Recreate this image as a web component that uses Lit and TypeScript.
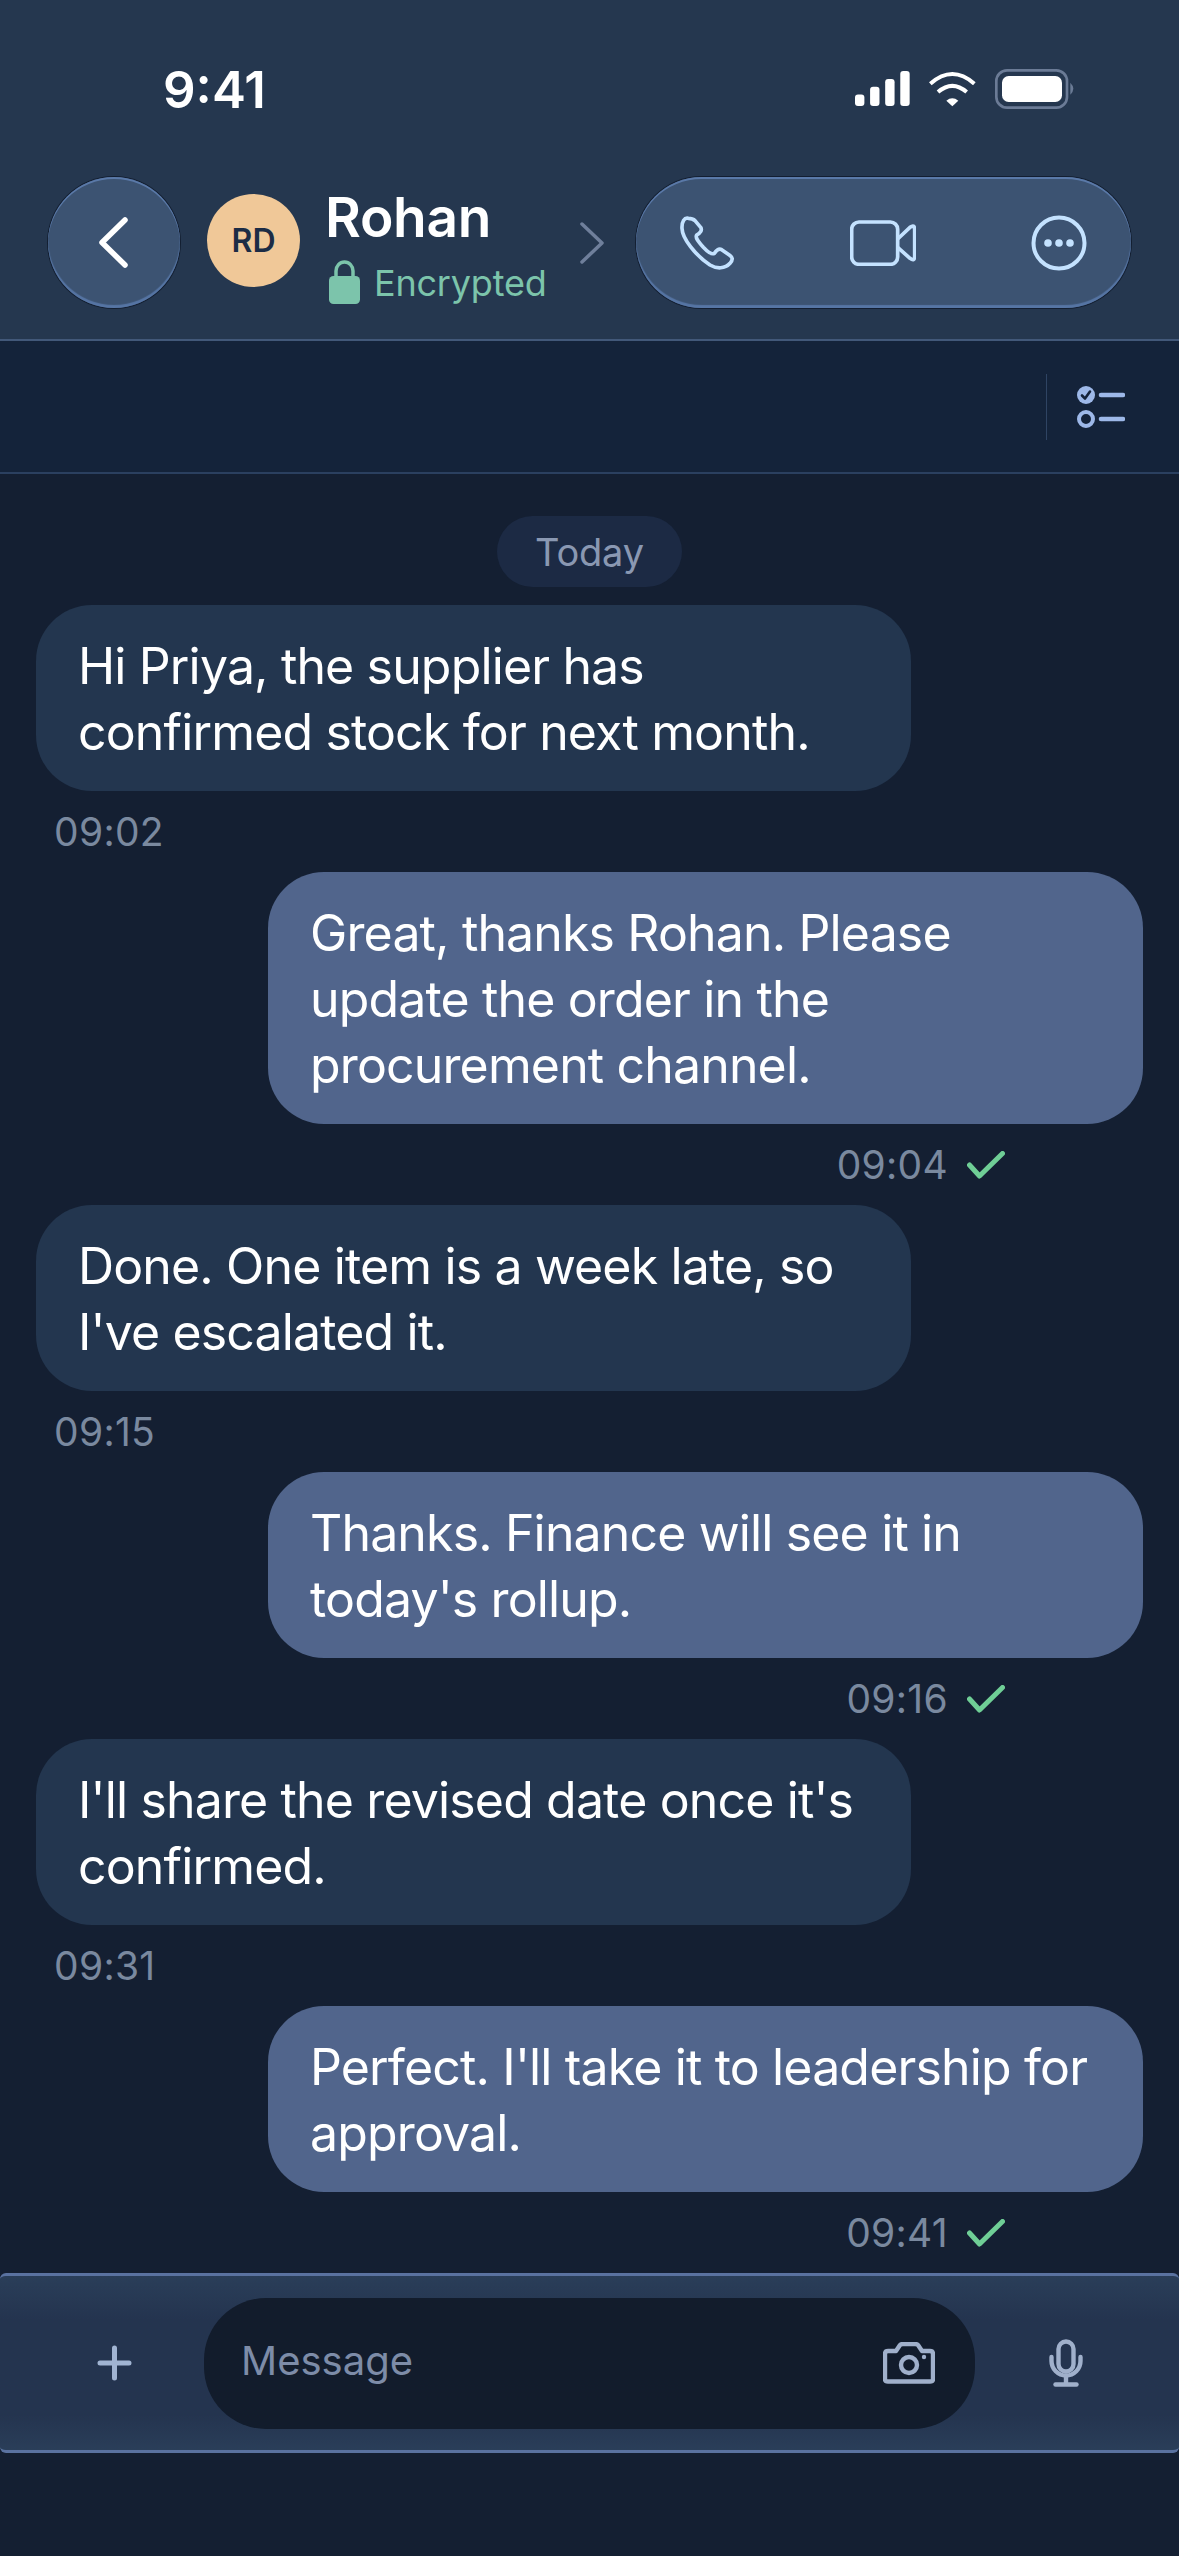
import { LitElement, html, css, svg } from "lit";
import { customElement } from "lit/decorators.js";

type Msg = { out: boolean; text: string; time: string };
const MESSAGES: Msg[] = [
  { out: false, text: "Hi Priya, the supplier has confirmed stock for next month.", time: "09:02" },
  { out: true, text: "Great, thanks Rohan. Please update the order in the procurement channel.", time: "09:04" },
  { out: false, text: "Done. One item is a week late, so I've escalated it.", time: "09:15" },
  { out: true, text: "Thanks. Finance will see it in today's rollup.", time: "09:16" },
  { out: false, text: "I'll share the revised date once it's confirmed.", time: "09:31" },
  { out: true, text: "Perfect. I'll take it to leadership for approval.", time: "09:41" },
];

@customElement("app-root")
export class AppRoot extends LitElement {
  static styles = css`
    :host {
      display: flex;
      flex-direction: column;
      width: 1179px;
      height: 2556px;
      overflow: hidden;
      background: #141f32;
      font-family: Inter, "Liberation Sans", sans-serif;
      color: #fff;
    }
    svg { display: block; flex: none; }
    .header {
      flex: none;
      height: 341px;
      box-sizing: border-box;
      background: #25374f;
      border-bottom: 2px solid #425879;
    }
    .status {
      height: 177px;
      box-sizing: border-box;
      padding: 0 104px 0 163px;
      display: flex;
      align-items: center;
      justify-content: space-between;
    }
    .clock { font-size: 51px; font-weight: 600; line-height: 60px; margin-top: 2px; }
    .status-icons { display: flex; align-items: center; gap: 18px; }
    .nav {
      height: 131px;
      padding: 0 48px;
      display: flex;
      align-items: center;
    }
    .glass {
      background: #3c5372;
      box-shadow: inset 0 2px 0 #5a79a8, inset 0 -3px 1px #5675a4, 0 0 0 1px rgba(14, 23, 39, 0.75);
      display: flex;
      align-items: center;
    }
    .back {
      flex: none;
      width: 132px;
      height: 131px;
      border-radius: 50%;
      justify-content: center;
    }
    .avatar {
      flex: none;
      width: 93px;
      height: 93px;
      margin: -5px 0 0 27px;
      border-radius: 50%;
      background: #f0c898;
      color: #1c2c45;
      font-size: 32px;
      font-weight: 600;
      display: flex;
      align-items: center;
      justify-content: center;
    }
    .who { align-self: flex-start; margin: 9px 0 0 25px; display: flex; flex-direction: column; }
    .name { font-size: 55px; font-weight: 600; line-height: 62px; letter-spacing: -0.3px; }
    .enc {
      display: flex;
      align-items: center;
      gap: 14px;
      margin-left: 4px;
      margin-top: 9px;
      font-size: 36px;
      line-height: 46px;
      letter-spacing: -0.2px;
      color: #7cc4ab;
    }
    .enc span { margin-top: 3px; }
    .more-chevron { margin-left: auto; margin-right: 32px; }
    .actions {
      flex: none;
      width: 495px;
      height: 131px;
      border-radius: 66px;
      box-sizing: border-box;
      padding: 0 44px 0 44px;
      justify-content: space-between;
    }
    .subbar {
      flex: none;
      height: 133px;
      box-sizing: border-box;
      background: #14233a;
      border-bottom: 2px solid #2b4060;
      display: flex;
      align-items: center;
      justify-content: flex-end;
      padding-right: 54px;
    }
    .subbar .divider { width: 1px; height: 66px; background: #2f4463; margin-right: 30px; }
    .list {
      flex: 1;
      min-height: 0;
      padding-top: 42px;
      display: flex;
      flex-direction: column;
    }
    .today {
      align-self: center;
      height: 72px;
      padding: 0 38px;
      margin-bottom: 18px;
      border-radius: 36px;
      background: #1c2a44;
      color: #8a98b2;
      font-size: 38px;
      letter-spacing: -0.2px;
      display: flex;
      align-items: center;
    }
    .msg { display: flex; flex-direction: column; align-items: flex-start; padding: 0 36px; }
    .msg.out { align-items: flex-end; }
    .bubble {
      width: 875px;
      box-sizing: border-box;
      padding: 28px 42px 26px;
      border-radius: 56px;
      background: #23364f;
      font-size: 50px;
      line-height: 66px;
      letter-spacing: -0.85px;
    }
    .out .bubble { background: #51658c; }
    .meta {
      height: 81px;
      display: flex;
      align-items: center;
      gap: 19px;
      font-size: 39px;
      letter-spacing: 0.3px;
      color: #7a899f;
      padding-left: 18px;
    }
    .out .meta { padding: 0 138px 0 0; }
    .composer {
      flex: none;
      height: 180px;
      box-sizing: border-box;
      border-top: 3px solid #5a72a0;
      border-bottom: 3px solid #5a72a0;
      border-radius: 6px;
      background: linear-gradient(#2a3e59, #24344f 25%, #24344f 80%, #2a3e59);
      display: flex;
      align-items: center;
      padding-left: 97px;
    }
    .input {
      flex: none;
      width: 771px;
      height: 131px;
      margin: 0 74px 0 72px;
      padding: 0 40px 0 37px;
      box-sizing: border-box;
      border-radius: 62px;
      background: #121c2c;
      color: #7d8ca8;
      font-size: 40px;
      display: flex;
      align-items: center;
      justify-content: space-between;
    }
    .input span { margin-top: -6px; }
    .foot { flex: none; height: 103px; }
  `;

  private check() {
    return svg`<svg width="38" height="28" viewBox="0 0 38 28" fill="none" stroke="#6fce96" stroke-width="5" stroke-linecap="round" stroke-linejoin="round"><path d="M2.5 14 L12.5 25 L35.5 2.5"/></svg>`;
  }

  render() {
    return html`
      <div class="header">
        <div class="status">
          <div class="clock">9:41</div>
          <div class="status-icons">
            <svg width="55" height="37" viewBox="45 66 164 108" fill="#fff">
              <rect x="45" y="138" width="28" height="34" rx="9"/>
              <rect x="90" y="115" width="28" height="57" rx="9"/>
              <rect x="135" y="92" width="28" height="80" rx="9"/>
              <rect x="180" y="68" width="28" height="104" rx="9"/>
            </svg>
            <svg width="49" height="36" viewBox="265 66 147 108" fill="none" stroke="#fff" stroke-width="12">
              <path d="M272 104 Q338 46 404 104"/>
              <path d="M295 129 Q338 92 381 129"/>
              <path d="M320 155 Q338 141 356 155 L338 172 Z" fill="#fff" stroke="none"/>
            </svg>
            <svg width="80" height="40" viewBox="466 56 240 120">
              <rect x="470" y="60" width="212" height="112" rx="32" fill="none" stroke="#6b7b96" stroke-width="8"/>
              <rect x="487" y="77" width="180" height="78" rx="20" fill="#fff"/>
              <path d="M692 97 Q710 115 692 133 Z" fill="#6b7b96"/>
            </svg>
          </div>
        </div>
        <div class="nav">
          <div class="glass back">
            <svg width="32" height="52" viewBox="0 0 32 52" fill="none" stroke="#fff" stroke-width="5.5" stroke-linecap="round" stroke-linejoin="round"><path d="M27 3 L4 25.5 L27 48"/></svg>
          </div>
          <div class="avatar">RD</div>
          <div class="who">
            <div class="name">Rohan</div>
            <div class="enc">
              <svg width="31" height="44" viewBox="0 0 31 44"><path d="M7 18 V11 a8.5 9 0 0 1 17 0 V18" fill="none" stroke="#7cc4ab" stroke-width="3.5"/><rect y="16" width="31" height="28" rx="4.5" fill="#7cc4ab"/></svg>
              <span>Encrypted</span>
            </div>
          </div>
          <svg class="more-chevron" width="24" height="42" viewBox="0 0 24 42" fill="none" stroke="#6f7f9b" stroke-width="3.5" stroke-linecap="round" stroke-linejoin="round"><path d="M2 2 L22 21 L2 40"/></svg>
          <div class="glass actions">
            <svg width="55" height="54" viewBox="60 48 165 162" fill="none" stroke="#c4e2ff" stroke-width="11" stroke-linejoin="round"><path d="M85 55 C73 52 65 65 66 85 C67 115 105 165 150 195 C170 207 195 207 210 190 C220 178 218 172 208 165 L185 149 C178 145 170 150 163 160 C155 165 145 158 130 142 C115 125 105 113 110 105 C122 98 127 90 122 82 L105 62 C98 55 92 55 85 55 Z"/></svg>
            <svg width="66" height="46" viewBox="572 64 198 136" fill="none" stroke="#c4e2ff" stroke-width="11" stroke-linejoin="round">
              <rect x="577" y="69" width="138" height="127" rx="22"/>
              <path d="M715 120 L752 85 Q766 75 766 92 V172 Q766 188 752 178 L715 145"/>
            </svg>
            <svg width="56" height="56" viewBox="0 0 56 56" fill="none" stroke="#c4e2ff" stroke-width="4">
              <circle cx="28" cy="28" r="25.5"/>
              <g fill="#c4e2ff" stroke="none"><circle cx="17" cy="28" r="3.8"/><circle cx="28" cy="28" r="3.8"/><circle cx="39" cy="28" r="3.8"/></g>
            </svg>
          </div>
        </div>
      </div>
      <div class="subbar">
        <div class="divider"></div>
        <svg width="48" height="44" viewBox="0 0 48 44" fill="none">
          <circle cx="9" cy="10" r="9" fill="#9db8e8"/>
          <path d="M5 10.5 L8 13.5 L13 6.5" stroke="#14233a" stroke-width="2.6" stroke-linecap="round" stroke-linejoin="round"/>
          <circle cx="9" cy="34" r="7" stroke="#9db8e8" stroke-width="4"/>
          <path d="M24 10 H46 M24 34 H46" stroke="#9db8e8" stroke-width="4.6" stroke-linecap="round"/>
        </svg>
      </div>
      <div class="list">
        <div class="today">Today</div>
        ${MESSAGES.map(
          (m) => html`
            <div class="msg ${m.out ? "out" : ""}">
              <div class="bubble">${m.text}</div>
              <div class="meta"><span>${m.time}</span>${m.out ? this.check() : ""}</div>
            </div>
          `
        )}
      </div>
      <div class="composer">
        <svg width="35" height="36" viewBox="0 0 35 36" fill="none" stroke="#a1b4d2" stroke-width="5" stroke-linecap="round"><path d="M17.5 3 V33 M3 18 H32"/></svg>
        <div class="input">
          <span>Message</span>
          <svg width="52" height="42" viewBox="0 0 52 42" fill="none" stroke="#a0b0cb" stroke-width="4.4" stroke-linejoin="round">
            <path d="M5 9 H13 L17 3 Q18 2 20 2 H32 Q34 2 35 3 L39 9 H47 Q50 9 50 12 V37 Q50 39.5 47 39.5 H5 Q2 39.5 2 37 V12 Q2 9 5 9 Z"/>
            <circle cx="26" cy="23" r="8"/>
            <circle cx="41" cy="15" r="2.2" fill="#a0b0cb" stroke="none"/>
          </svg>
        </div>
        <svg width="34" height="48" viewBox="0 0 34 48" fill="none" stroke="#a0b0cb" stroke-width="4.4" stroke-linecap="round">
          <rect x="9.5" y="2.5" width="15" height="30" rx="7.5"/>
          <path d="M2.5 18 V22 a14.5 14.5 0 0 0 29 0 V18"/>
          <path d="M17 37 V44"/>
          <path d="M6.5 45.5 H27.5"/>
        </svg>
      </div>
      <div class="foot"></div>
    `;
  }
}
